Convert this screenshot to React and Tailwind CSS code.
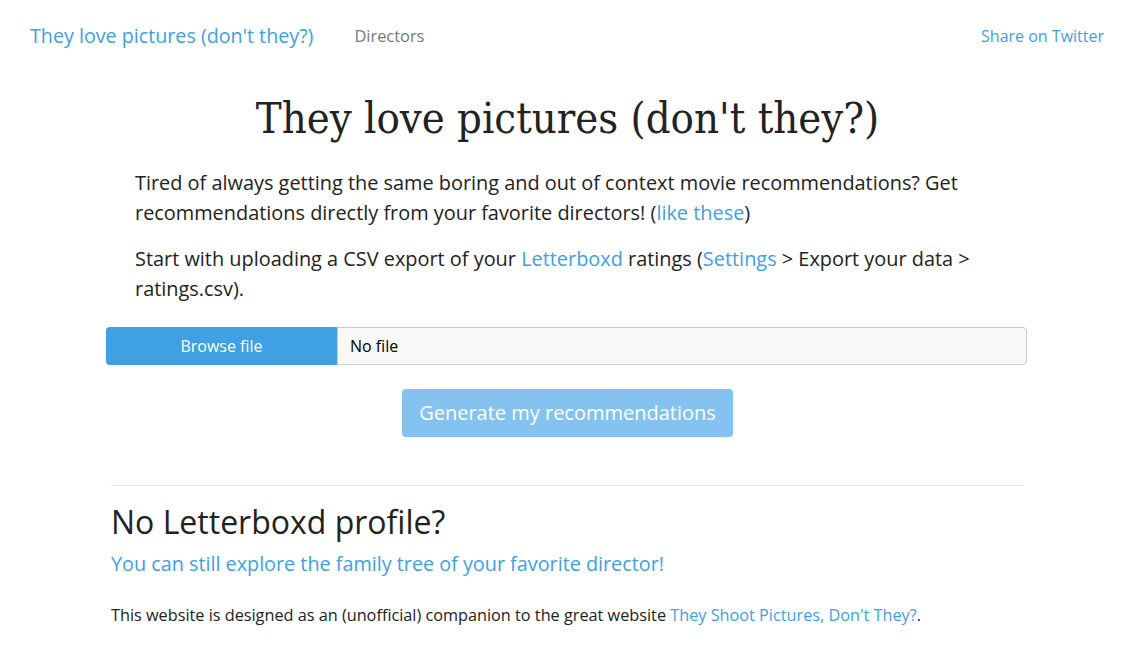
export default function App() {
  const sans = { fontFamily: '"Open Sans", "Noto Sans", sans-serif' };
  return (
    <div className="min-h-[672px] bg-white text-[#222]" style={sans}>
      <nav className="flex items-center h-[72px] px-[30px]">
        <a className="text-[19.7px] text-[#3fa0e3]">They love pictures (don't they?)</a>
        <a className="ml-[41px] text-[16.4px] text-[#777]">Directors</a>
        <a className="ml-auto mr-[3px] text-[16px] text-[#3fa0e3]">Share on Twitter</a>
      </nav>
      <div className="w-[913px] ml-[111px]">
        <h1
          className="text-center text-[43.2px] leading-[60px] mt-[16px] text-[#222]"
          style={{ fontFamily: '"DejaVu Serif Condensed", "DejaVu Serif", serif', fontStretch: 'condensed' }}
        >
          They love pictures (don't they?)
        </h1>
        <div className="pl-[24px] pr-[20px] mt-[20px] text-[19.9px] leading-[30px]">
          <p>
            Tired of always getting the same boring and out of context movie recommendations? Get recommendations directly
            from your favorite directors! (<a className="text-[#3fa0e3]">like these</a>)
          </p>
          <p className="mt-[16px]">
            Start with uploading a CSV export of your <a className="text-[#3fa0e3]">Letterboxd</a> ratings (
            <a className="text-[#3fa0e3]">Settings</a> &gt; Export your data &gt; ratings.csv).
          </p>
        </div>
        <div className="flex mt-[23px] -ml-[5px] w-[921px] h-[38px]">
          <div className="w-[231px] flex items-center justify-center bg-[#3fa0e3] text-white text-[16px] rounded-l-[4px]">
            Browse file
          </div>
          <div className="flex-1 flex items-center pl-[12px] bg-[#f9f8f7] border border-[#ccc] rounded-r-[4px] text-[16px] text-black">
            No file
          </div>
        </div>
        <div className="flex justify-center mt-[24px]">
          <button className="h-[48px] px-[17px] bg-[#84c3ef] text-white text-[20px] rounded-[4px]">
            Generate my recommendations
          </button>
        </div>
        <hr className="mt-[48px] border-t border-[#e5e5e5]" />
        <h2 className="mt-[16px] text-[32px] leading-[40px] text-[#222]">No Letterboxd profile?</h2>
        <p className="mt-[7px] text-[19.8px] leading-[30px] text-[#3fa0e3]">
          You can still explore the family tree of your favorite director!
        </p>
        <p className="mt-[24px] text-[16.25px] leading-[24px]">
          This website is designed as an (unofficial) companion to the great website{" "}
          <a className="text-[#3fa0e3]">They Shoot Pictures, Don't They?</a>.
        </p>
      </div>
    </div>
  );
}
